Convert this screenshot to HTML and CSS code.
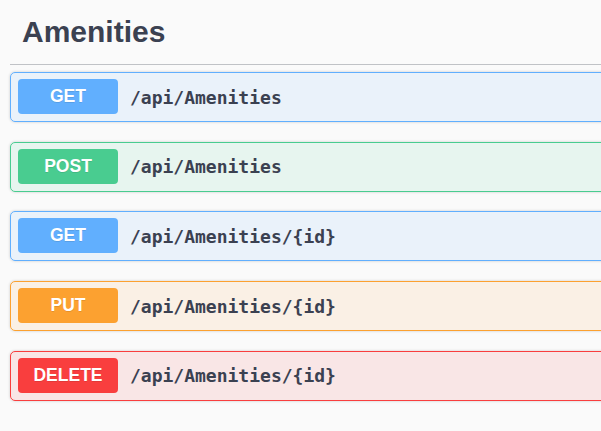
FILE: index.html
```html
<!DOCTYPE html>
<html>
<head>
<meta charset="utf-8">
<link rel="stylesheet" href="styles.css">
</head>
<body>
<div class="section">
  <h3 class="tag">Amenities</h3>
  <div class="ops">
    <div class="op op-get"><span class="method">GET</span><span class="path">/api/Amenities</span></div>
    <div class="op op-post"><span class="method">POST</span><span class="path">/api/Amenities</span></div>
    <div class="op op-get"><span class="method">GET</span><span class="path">/api/Amenities/{id}</span></div>
    <div class="op op-put"><span class="method">PUT</span><span class="path">/api/Amenities/{id}</span></div>
    <div class="op op-delete"><span class="method">DELETE</span><span class="path">/api/Amenities/{id}</span></div>
  </div>
</div>
</body>
</html>
```
FILE: styles.css
```css
html, body {
  margin: 0;
  padding: 0;
  background: #fafafa;
}
.section {
  width: 601px;
  box-sizing: border-box;
  overflow: hidden;
  padding-left: 10px;
  padding-bottom: 30px;
  font-family: "Liberation Sans", Arial, sans-serif;
  color: #3b4151;
}
.tag {
  margin: 0 -20px 0 0;
  padding: 15px 0 15px 12px;
  font-size: 30px;
  line-height: 34px;
  font-weight: bold;
  border-bottom: 1px solid rgba(59, 65, 81, 0.3);
}
.ops {
  padding-top: 7px;
  margin-right: -20px;
  display: flex;
  flex-direction: column;
  gap: 19.7px;
}
.op {
  display: flex;
  align-items: center;
  gap: 12px;
  height: 48px;
  padding: 0 7px;
  border: 1px solid;
  border-radius: 5px;
  box-shadow: 0 0 3px rgba(0, 0, 0, 0.19);
}
.method {
  width: 100px;
  height: 35px;
  margin-top: -1px;
  border-radius: 4px;
  display: flex;
  align-items: center;
  justify-content: center;
  color: #fff;
  font-weight: bold;
  font-size: 17.5px;
  text-shadow: 0 1px 0 rgba(0, 0, 0, 0.1);
}
.path {
  font-family: "DejaVu Sans Mono", monospace;
  font-weight: bold;
  font-size: 18px;
  color: #3b4151;
}
.op-get { background: rgba(97, 175, 254, 0.1); border-color: #61affe; }
.op-get .method { background: #61affe; }
.op-post { background: rgba(73, 204, 144, 0.1); border-color: #49cc90; }
.op-post .method { background: #49cc90; }
.op-put { background: rgba(252, 161, 48, 0.1); border-color: #fca130; }
.op-put .method { background: #fca130; }
.op-delete { background: rgba(249, 62, 62, 0.1); border-color: #f93e3e; }
.op-delete .method { background: #f93e3e; }
```
